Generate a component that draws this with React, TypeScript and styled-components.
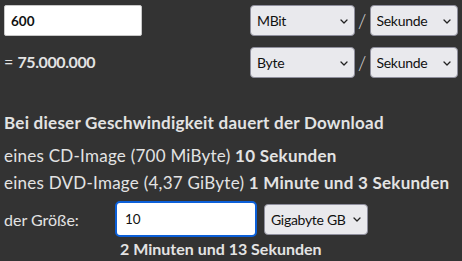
import React, { useEffect, useRef } from "react";
import styled, { createGlobalStyle } from "styled-components";

const Global = createGlobalStyle`
  html, body { margin: 0; padding: 0; background: #333333; }
  body {
    font-family: Lato, "Noto Sans", sans-serif;
    font-size: 17px;
    letter-spacing: 0.25px;
    color: #e3e3e3;
  }
`;

const Page = styled.div`
  padding: 5px 6px 0 4px;
  width: 462px;
  height: 261px;
  box-sizing: border-box;
  overflow: hidden;
`;

const ConvGrid = styled.div`
  display: grid;
  grid-template-columns: 246px auto;
  row-gap: 11px;
  align-items: center;
`;

const UnitGroup = styled.div`
  display: flex;
  align-items: center;
  gap: 3px;
`;

const Slash = styled.span`
  font-size: 19px;
  font-weight: 300;
  color: #e3e3e3;
`;

const TextInput = styled.input<{ $w: number; $focused?: boolean }>`
  box-sizing: border-box;
  width: ${(p) => p.$w}px;
  height: ${(p) => (p.$focused ? 36 : 31)}px;
  padding: 0 ${(p) => (p.$focused ? 8 : 6)}px;
  font-family: inherit;
  font-size: 13.5px;
  letter-spacing: 0;
  font-weight: ${(p) => (p.$focused ? 400 : 700)};
  color: #111;
  caret-color: #000;
  background: #fff;
  border: ${(p) => (p.$focused ? "2px solid #0b5fd8" : "1px solid #c8c8c8")};
  border-radius: ${(p) => (p.$focused ? 5 : 2)}px;
  outline: none;
`;

const SelectWrap = styled.div<{ $w: number }>`
  position: relative;
  width: ${(p) => p.$w}px;
  height: 31px;
`;

const Select = styled.select`
  appearance: none;
  box-sizing: border-box;
  width: 100%;
  height: 100%;
  padding: 0 16px 0 6px;
  font-family: inherit;
  font-size: 14px;
  letter-spacing: -0.3px;
  color: #111;
  background: #e9e9ed;
  border: 1px solid #8f8f9d;
  border-radius: 4px;
`;

const Chevron = styled.svg`
  position: absolute;
  right: 7px;
  top: 50%;
  margin-top: -2px;
  width: 8px;
  height: 5px;
  pointer-events: none;
`;

const Result = styled.div`
  font-size: 16px;
  letter-spacing: 0;
  margin-top: -2px;
`;

const Amount = styled.b`
  letter-spacing: -0.4px;
`;

const Heading = styled.div`
  margin-top: 31px;
  margin-bottom: 6px;
  font-weight: 700;
  line-height: 27px;
`;

const Line = styled.div`
  line-height: 27px;
`;

const SizeGrid = styled.div`
  margin-top: 5px;
  display: grid;
  grid-template-columns: 111px auto;
  align-items: center;
  font-size: 16px;
  letter-spacing: 0;
`;

const SizeControls = styled.div`
  display: flex;
  align-items: center;
  gap: 7px;
`;

const Duration = styled.div`
  grid-column: 2;
  padding-left: 5px;
  margin-top: 2px;
  font-weight: 700;
  line-height: 20px;
`;

function Dropdown({ w, value, options }: { w: number; value: string; options: string[] }) {
  return (
    <SelectWrap $w={w}>
      <Select defaultValue={value}>
        {options.map((o) => (
          <option key={o}>{o}</option>
        ))}
      </Select>
      <Chevron viewBox="0 0 8 5">
        <path d="M1 1 L4 4 L7 1" fill="none" stroke="#222" strokeWidth="1.3" strokeLinecap="round" strokeLinejoin="round" />
      </Chevron>
    </SelectWrap>
  );
}

const rateUnits = ["Bit", "KBit", "MBit", "GBit", "Byte", "KByte", "MByte", "GByte"];
const timeUnits = ["Sekunde", "Minute", "Stunde"];

export default function App() {
  const sizeRef = useRef<HTMLInputElement>(null);
  useEffect(() => {
    const el = sizeRef.current;
    if (el) {
      el.focus();
      el.setSelectionRange(el.value.length, el.value.length);
    }
  }, []);
  return (
    <>
      <Global />
      <Page>
        <ConvGrid>
          <TextInput $w={138} defaultValue="600" />
          <UnitGroup>
            <Dropdown w={105} value="MBit" options={rateUnits} />
            <Slash>/</Slash>
            <Dropdown w={88} value="Sekunde" options={timeUnits} />
          </UnitGroup>
          <Result>
            = <Amount>75.000.000</Amount>
          </Result>
          <UnitGroup>
            <Dropdown w={105} value="Byte" options={rateUnits} />
            <Slash>/</Slash>
            <Dropdown w={88} value="Sekunde" options={timeUnits} />
          </UnitGroup>
        </ConvGrid>
        <Heading>Bei dieser Geschwindigkeit dauert der Download</Heading>
        <Line>
          eines CD-Image (700 MiByte) <b>10 Sekunden</b>
        </Line>
        <Line>
          eines DVD-Image (4,37 GiByte) <b>1 Minute und 3 Sekunden</b>
        </Line>
        <SizeGrid>
          <span>der Größe:</span>
          <SizeControls>
            <TextInput ref={sizeRef} $w={142} $focused defaultValue="10" />
            <Dropdown w={104} value="Gigabyte GB" options={["Megabyte MB", "Gigabyte GB", "Terabyte TB"]} />
          </SizeControls>
          <Duration>2 Minuten und 13 Sekunden</Duration>
        </SizeGrid>
      </Page>
    </>
  );
}
